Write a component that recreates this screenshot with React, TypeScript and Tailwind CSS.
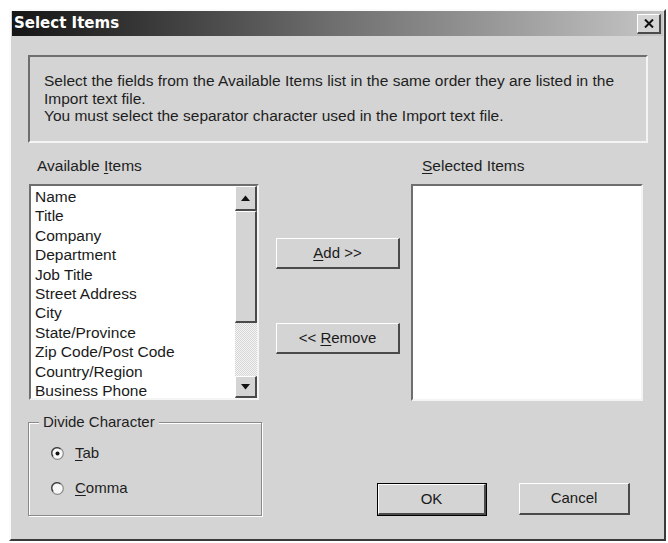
const font = "font-['Liberation_Sans',Arial,sans-serif]";
const sunken =
  'border-2 border-t-[#6e6e6e] border-l-[#6e6e6e] border-b-[#f4f4f4] border-r-[#f4f4f4]';
const raised =
  'border-t border-l border-b-2 border-r-2 border-t-white border-l-white border-b-[#4a4a4a] border-r-[#4a4a4a]';

const items = [
  'Name',
  'Title',
  'Company',
  'Department',
  'Job Title',
  'Street Address',
  'City',
  'State/Province',
  'Zip Code/Post Code',
  'Country/Region',
  'Business Phone',
];

const Key: React.FC<{ children: React.ReactNode }> = ({ children }) => (
  <span className="underline underline-offset-2">{children}</span>
);

const Arrow: React.FC<{ down?: boolean }> = ({ down }) => (
  <svg width="9" height="6" viewBox="0 0 9 6">
    <path d={down ? 'M0 0h9L4.5 5.5z' : 'M0 6h9L4.5 0.5z'} fill="#111" />
  </svg>
);

const ScrollBtn: React.FC<{ down?: boolean; className?: string }> = ({ down, className }) => (
  <div className={`flex items-center justify-center bg-[#d4d4d4] ${raised} ${className ?? ''}`}>
    <Arrow down={down} />
  </div>
);

const Radio: React.FC<{ checked?: boolean }> = ({ checked }) => (
  <svg width="13" height="13" viewBox="0 0 13 13">
    <circle cx="6.5" cy="6.5" r="5.8" fill="#f7f7f7" stroke="#8a8a8a" strokeWidth="1.2" />
    <path d="M2.2 9.5A5 5 0 0 1 9.5 2.2" fill="none" stroke="#3c3c3c" strokeWidth="1.2" />
    {checked && <circle cx="6.5" cy="6.5" r="2" fill="#111" />}
  </svg>
);

const Button: React.FC<{ children: React.ReactNode; className?: string }> = ({
  children,
  className,
}) => (
  <button
    className={`flex items-center justify-center bg-[#d4d4d4] text-[15px] text-[#1a1a1a] ${raised} ${className ?? ''}`}
  >
    {children}
  </button>
);

export default function App() {
  return (
    <div className={`h-[543px] w-[668px] overflow-hidden bg-white pt-[9px] pl-[9px] ${font}`}>
      <div className="h-[532px] w-[657px] border-2 border-t-[#fafafa] border-l-[#fafafa] border-b-[#3a3a3a] border-r-[#3a3a3a] bg-[#d4d4d4]">
        {/* title bar */}
        <div className="mx-px flex h-[25px] items-center justify-between bg-linear-to-r from-[#161616] via-[#707070] to-[#c6c6c6] pl-[2px] pr-[2px]">
          <span className="font-['DejaVu_Sans',sans-serif] text-[15px] font-bold text-white">
            Select Items
          </span>
          <div
            className={`flex h-[20px] w-[24px] items-center justify-center bg-[#d4d4d4] ${raised}`}
          >
            <svg width="10" height="9" viewBox="0 0 10 9">
              <path d="M1 0.5l8 8M9 0.5l-8 8" stroke="#111" strokeWidth="2" />
            </svg>
          </div>
        </div>

        <div className="pl-[17px] pr-[16px]">
          {/* info box */}
          <div
            className={`mt-[19px] h-[88px] w-[620px] ${sunken} pl-[14px] pt-[15px] text-[15.5px] leading-[17.5px] text-[#1e1e1e]`}
          >
            <p>
              Select the fields from the Available Items list in the same order they are listed in the
              Import text file.
            </p>
            <p>You must select the separator character used in the Import text file.</p>
          </div>

          <div className="flex">
            {/* left column */}
            <div className="w-[234px]">
              <div className="mt-[14px] h-[18px] pl-[9px] text-[15.5px] leading-[18px] text-[#1e1e1e]">
                Available <Key>I</Key>tems
              </div>
              <div className={`ml-px mt-[9px] flex h-[216px] w-[230px] bg-white ${sunken}`}>
                <ul className="flex-1 pl-[4px] pt-px text-[15.5px] leading-[19.4px] text-[#1a1a1a]">
                  {items.map((it) => (
                    <li key={it}>{it}</li>
                  ))}
                </ul>
                <div className="flex w-[22px] flex-col">
                  <ScrollBtn className="h-[25px]" />
                  <div className={`h-[112px] bg-[#d4d4d4] ${raised}`} />
                  <div className="flex-1 bg-[repeating-conic-gradient(#f4f4f4_0_25%,#d6d6d6_0_50%)] bg-[length:2px_2px]" />
                  <ScrollBtn down className="h-[22px]" />
                </div>
              </div>

              <fieldset className="mt-[13px] h-[103px] w-[234px] border border-[#8a8a8a] shadow-[inset_1px_1px_0_#fff,1px_1px_0_#fff]">
                <legend className="ml-[10px] bg-[#d4d4d4] px-[4px] text-[15px] leading-[18px] text-[#1e1e1e]">
                  Divide Character
                </legend>
                <div className="flex flex-col gap-[17px] pl-[22px] pt-[13px] text-[15px] text-[#1e1e1e]">
                  <label className="flex h-[18px] items-center gap-[11px]">
                    <Radio checked />
                    <span>
                      <Key>T</Key>ab
                    </span>
                  </label>
                  <label className="flex h-[18px] items-center gap-[11px]">
                    <Radio />
                    <span>
                      <Key>C</Key>omma
                    </span>
                  </label>
                </div>
              </fieldset>
            </div>

            {/* right area */}
            <div className="flex w-[386px] flex-col">
              <div className="flex">
                <div className="ml-[14px] w-[124px] pt-[95px]">
                  <Button className="h-[31px] w-full">
                    <span>
                      <Key>A</Key>dd &gt;&gt;
                    </span>
                  </Button>
                  <Button className="mt-[54px] h-[31px] w-full">
                    <span>
                      &lt;&lt; <Key>R</Key>emove
                    </span>
                  </Button>
                </div>
                <div className="ml-[11px] w-[232px]">
                  <div className="mt-[14px] h-[18px] pl-[11px] text-[15.5px] leading-[18px] text-[#1e1e1e]">
                    <Key>S</Key>elected Items
                  </div>
                  <div className={`mt-[9px] h-[217px] w-[232px] bg-white ${sunken}`} />
                </div>
              </div>
              <div className="mt-[82px] flex justify-end gap-[32px] pr-[18px]">
                <div className="border border-black">
                  <Button className="h-[31px] w-[108px]">OK</Button>
                </div>
                <Button className="h-[32px] w-[111px]">Cancel</Button>
              </div>
            </div>
          </div>
        </div>
      </div>
    </div>
  );
}
